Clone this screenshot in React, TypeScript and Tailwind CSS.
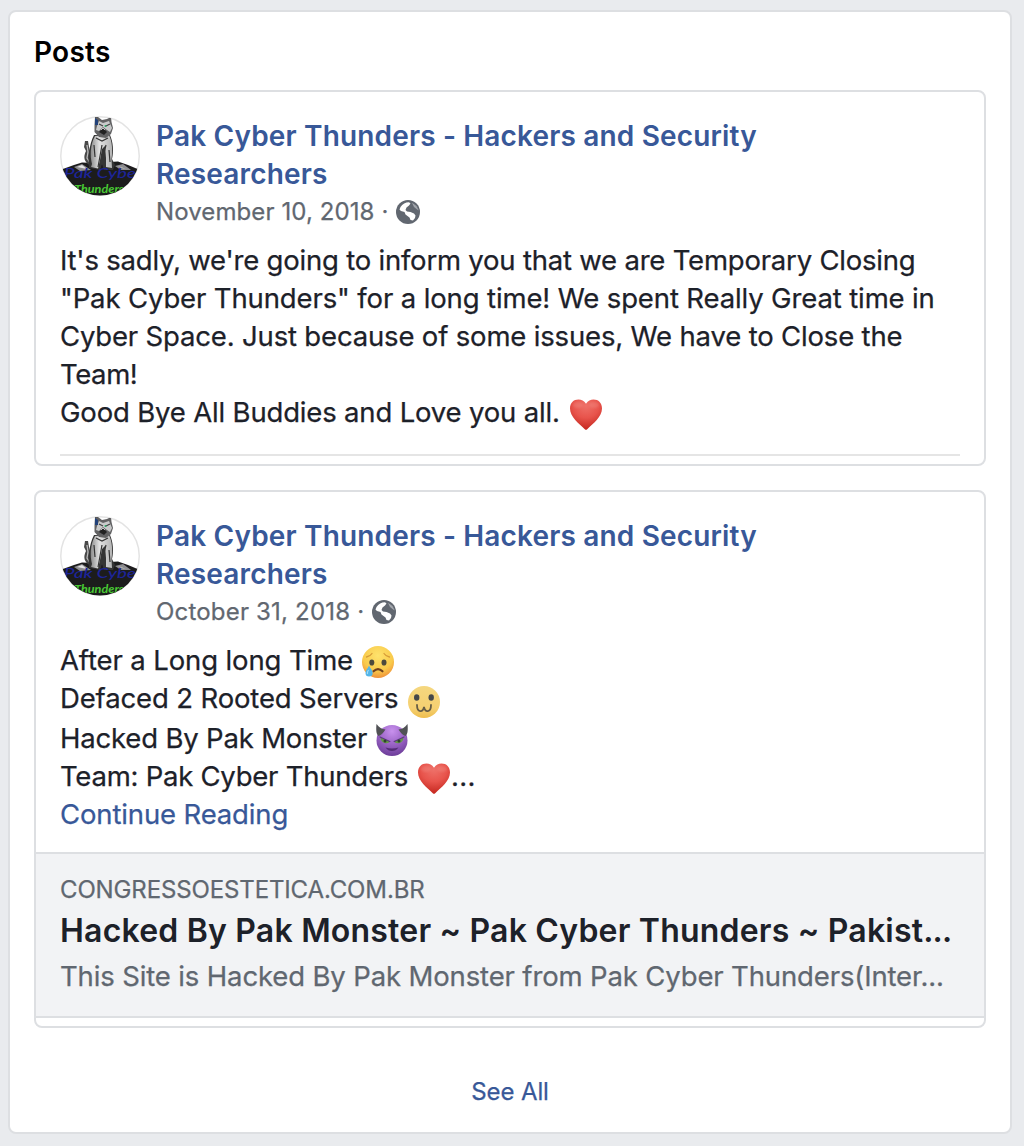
import type { ReactNode } from 'react';

function Avatar() {
  return (
    <svg viewBox="0 0 80 80" className="size-20 shrink-0" aria-hidden="true">
      <defs>
        <clipPath id="round"><circle cx="40" cy="40" r="39.5" /></clipPath>
        <filter id="soft"><feGaussianBlur stdDeviation="0.5" /></filter>
        <linearGradient id="fur" x1="0" x2="1">
          <stop offset="0" stopColor="#8c8c8c" />
          <stop offset="0.4" stopColor="#e2e2e2" />
          <stop offset="1" stopColor="#b4b4b4" />
        </linearGradient>
      </defs>
      <g clipPath="url(#round)">
        <rect width="80" height="80" fill="#fff" />
        <g filter="url(#soft)">
          <path d="M0 54 L14 49 L22 46.500 L34 47 L58 45.500 L68 49 L80 54 V80 H0Z" fill="#1d1b1e" />
          <path d="M14 51 L22 48 L31 54 L20 55Z M55 50 L63 48 L71 54 L61 54Z" fill="#8d8d90" />
          <path d="M17 51 L22 49 L27 53Z M58 50 L66 53 L62 52Z" fill="#e5e5e5" />
          <path d="M28 48 C23 44 24 39 26 35 L24 31 L25 25 L28 25 L29 31 L32 42 L33 51Z" fill="#494949" />
          <path d="M27 29 L28 36 L27 42 L30 47" stroke="#b9b9b9" strokeWidth="1.300" fill="none" />
          <path d="M34 19 C29 28 28 43 29 52 L40 54 L42 48 L44 54 L53 54 L55 49 L52 43 C54 35 53 26 50 19Z" fill="#353535" />
          <path d="M35 20 C30 29 30 40 32 48 L31 51 L38 52.500 L40 44 L42 33 L45 30 L46 42 L46 51 L52 52 L51.500 43 C53 34 52 25 49 19Z" fill="url(#fur)" />
          <path d="M42 29 L38 51 M46 29 L42 45 M49 34 L50 46 M34 29 L35 41 M36 22 L42 25 L48 22" stroke="#343434" strokeWidth="1.200" fill="none" />
          <path d="M35 1 L38 1 L42 4 L47 3 L51 1 L51.500 6 L53 12 L51 18 L46 22 L39 21 L34.500 16 L34.500 9Z" fill="#626264" />
          <path d="M39 5 L43 7 L49 5 L52 12 L50 16 L47 14 L43 11 L39 15 L36 14 L37 10Z" fill="#c8c9c9" />
          <path d="M39 8 L43 10 M50 8 L46 10" stroke="#3e3e3e" strokeWidth="1.100" />
          <path d="M39 16 L43 12 L47 16 L44 19Z" fill="#242424" />
          <path d="M41 14 L43 12 L45 14" fill="none" stroke="#e6e6e6" strokeWidth=".8" />
          <path d="M35 2 L38 4 L38 9 L35 9Z" fill="#244379" />
          <circle cx="45.500" cy="10" r="1" fill="#28a565" />
        </g>
        <text x="4" y="62" fontFamily="Lato, sans-serif" fontStyle="italic" fontWeight="500" fontSize="12.500" textLength="72" lengthAdjust="spacingAndGlyphs" fill="#1c249a">Pak Cybe</text>
        <text x="14" y="77" fontFamily="Lato, sans-serif" fontStyle="italic" fontWeight="700" fontSize="11" textLength="50" lengthAdjust="spacingAndGlyphs" fill="#48c934">Thunders</text>
      </g>
      <circle cx="40" cy="40" r="39.250" fill="none" stroke="#000" strokeOpacity="0.11" strokeWidth="1.500" />
    </svg>
  );
}

function Globe() {
  return (
    <svg viewBox="0 0 24 24" className="ml-2 size-6" aria-hidden="true">
      <circle cx="12" cy="12" r="12" fill="#616770" />
      <path d="M4.500 7 C6.500 4 9.500 2.300 13 2.300 L14.500 3.500 L13 5.500 L10.500 7.500 L9.500 10 L11 11.500 L14.500 12 L18 13.500 L19.500 15.500 L19 18 L17 20.500 L14.500 20 L13.500 17.500 L9.500 14.500 L8.500 12 L5 11 L3.500 9.500Z" fill="#fff" />
      <path d="M16 2.800 L20.500 6 L22.800 10.500 L20.500 9 L18 7Z" fill="#a2a6ac" />
    </svg>
  );
}

function Heart({ className }: { className: string }) {
  return (
    <svg viewBox="0 0 32 32" className={`size-8 shrink-0 ${className}`} aria-hidden="true">
      <defs>
        <radialGradient id="heart" cx="0.5" cy="0.2" r="0.8">
          <stop offset="0" stopColor="#ee7169" />
          <stop offset="0.5" stopColor="#e8544c" />
          <stop offset="1" stopColor="#c5271f" />
        </radialGradient>
        <filter id="glow"><feGaussianBlur stdDeviation="1.2" /></filter>
      </defs>
      <path d="M16 4.800 C14 1.800 11.500 .6 8.500 .6 C3.500 .6 0 4 0 9.500 C0 18 9 24.500 14.800 30.200 Q16 31.200 17.200 30.200 C23 24.500 32 18 32 9.500 C32 4 28.500 .6 23.500 .6 C20.500 .6 18 1.800 16 4.800Z" fill="url(#heart)" />
      <g filter="url(#glow)" fill="#f18b83" opacity=".4">
        <ellipse cx="8" cy="6" rx="5" ry="3" />
        <ellipse cx="24" cy="6" rx="5" ry="3" />
      </g>
    </svg>
  );
}

function SadFace() {
  return (
    <svg viewBox="0 0 32 32" className="mt-[5px] ml-[9px] size-8 shrink-0" aria-hidden="true">
      <defs>
        <radialGradient id="sad" cx=".5" cy=".3" r=".72">
          <stop offset="0" stopColor="#fee36d" />
          <stop offset=".65" stopColor="#f9ca4b" />
          <stop offset="1" stopColor="#ef8d38" />
        </radialGradient>
      </defs>
      <circle cx="16" cy="16" r="16" fill="url(#sad)" />
      <path d="M4.500 11 Q8 10.500 10 7.500 M27.500 11 Q24 10.500 22 7.500" stroke="#d59a37" strokeWidth="1.300" strokeLinecap="round" fill="none" />
      <ellipse cx="9.800" cy="16.500" rx="2.500" ry="3.100" fill="#4d4a3c" />
      <ellipse cx="22" cy="16.500" rx="2.500" ry="3.100" fill="#4d4a3c" />
      <path d="M11.500 25.300 Q16 20.800 20.500 25.300" stroke="#70401e" strokeWidth="2.200" strokeLinecap="round" fill="none" />
      <path d="M7 19.500 C6 22.500 3.500 24 3.500 27 A3.600 3.600 0 0 0 10.700 27 C10.700 24 8 22.500 7 19.500Z" fill="#54b5e8" />
      <path d="M6.500 24 Q5 26 5.500 28" stroke="#a2dcf5" strokeWidth="1.200" fill="none" />
    </svg>
  );
}

function CatSmile() {
  return (
    <svg viewBox="0 0 32 32" className="mt-[7px] ml-[10px] size-8 shrink-0" aria-hidden="true">
      <defs>
        <linearGradient id="smile" x1="0" y1="0" x2="0" y2="1">
          <stop offset="0" stopColor="#f5d77f" />
          <stop offset=".7" stopColor="#f5d071" />
          <stop offset="1" stopColor="#eebd4c" />
        </linearGradient>
      </defs>
      <circle cx="16" cy="16" r="16" fill="url(#smile)" />
      <ellipse cx="8.700" cy="11.500" rx="2.700" ry="3.300" fill="#45484a" />
      <ellipse cx="23.200" cy="11.500" rx="2.700" ry="3.300" fill="#45484a" />
      <path d="M9 19 C9 27 15 26.500 16 21 C17 26.500 23 27 23 19" stroke="#665d45" strokeWidth="1.800" strokeLinecap="round" fill="none" />
    </svg>
  );
}

function Devil() {
  return (
    <svg viewBox="0 0 32 32" className="mt-[5px] ml-[9px] size-8 shrink-0" aria-hidden="true">
      <defs>
        <radialGradient id="devil" cx=".5" cy=".2" r=".8">
          <stop offset="0" stopColor="#c891ed" />
          <stop offset=".5" stopColor="#9d66c8" />
          <stop offset="1" stopColor="#6d3d99" />
        </radialGradient>
      </defs>
      <circle cx="16" cy="16.500" r="15.500" fill="url(#devil)" />
      <path d="M.5 0 C0 5 0 10 2.500 12 Q6 11 9.500 5.500 C6 5 3 3.500 .5 0Z M31.500 0 C32 5 32 10 29.500 12 Q26 11 22.500 5.500 C26 5 29 3.500 31.500 0Z" fill="#505155" />
      <path d="M4.500 13.500 L14 17.500 Q12.500 20 8.500 19 Q5 18 4.500 13.500Z M27.500 13.500 L18 17.500 Q19.500 20 23.500 19 Q27 18 27.500 13.500Z" fill="#649747" />
      <path d="M4 13 L13.800 17.500 M28 13 L18.200 17.500" stroke="#5c387f" strokeWidth="1.300" strokeLinecap="round" />
      <circle cx="9" cy="17" r="1.500" fill="#2f402c" />
      <circle cx="23" cy="17" r="1.500" fill="#2f402c" />
      <path d="M9.500 23.500 Q16 25.500 22.500 23.500 Q20 27 16 27 Q12 27 9.500 23.500Z" fill="#542c77" />
    </svg>
  );
}

function Line({ children, className = '' }: { children: ReactNode; className?: string }) {
  return <div className={`flex h-[38px] whitespace-nowrap ${className}`}>{children}</div>;
}

function PostHeader({ date, dateClass }: { date: string; dateClass: string }) {
  return (
    <header className="flex gap-4 px-6 pt-6">
      <Avatar />
      <div className="pt-px">
        <a className="block text-[28px] leading-[38px] font-semibold tracking-[0.16px] whitespace-nowrap text-[#385898]">
          Pak Cyber Thunders - Hackers and Security
          <br />
          Researchers
        </a>
        <div className={`flex h-[38px] items-center text-2xl text-[#616770] [-webkit-text-stroke:0.25px] ${dateClass}`}>
          <span>{date} ·</span>
          <Globe />
        </div>
      </div>
    </header>
  );
}

export default function App() {
  return (
    <main className="h-[1146px] bg-[#e9ebee] pt-2.5 pr-3 pl-2 font-[Inter,sans-serif] text-[#1d2129]">
      <section className="h-[1124px] rounded-lg border-2 border-[#dddfe2] bg-white px-6">
        <h1 className="h-[78px] pt-5 text-[28px] leading-10 font-semibold tracking-[0.25px] text-black">Posts</h1>

        <article className="h-[376px] rounded-lg border-2 border-[#dddfe2]">
          <PostHeader date="November 10, 2018" dateClass="tracking-[0.1px]" />
          <div className="mx-6 h-[225px] border-b-2 border-[#e5e5e5] pt-[10px] text-[27.5px] leading-[38px] tracking-[-0.17px] [-webkit-text-stroke:0.25px]">
            <Line className="tracking-[-0.21px]">It's sadly, we're going to inform you that we are Temporary Closing</Line>
            <Line className="tracking-[-0.13px]">"Pak Cyber Thunders" for a long time! We spent Really Great time in</Line>
            <Line>Cyber Space. Just because of some issues, We have to Close the</Line>
            <Line className="tracking-[-0.4px]">Team!</Line>
            <Line>
              Good Bye All Buddies and Love you all.
              <Heart className="mt-1.5 ml-[10px]" />
            </Line>
          </div>
        </article>

        <article className="mt-6 h-[538px] rounded-lg border-2 border-[#dddfe2]">
          <PostHeader date="October 31, 2018" dateClass="tracking-[0.19px]" />
          <div className="mx-6 h-[221px] pt-[10px] text-[27.5px] leading-[38px] tracking-[-0.14px] [-webkit-text-stroke:0.25px]">
            <Line className="tracking-[-0.12px]">After a Long long Time<SadFace /></Line>
            <Line className="mb-0.5">Defaced 2 Rooted Servers<CatSmile /></Line>
            <Line className="tracking-[-0.18px]">Hacked By Pak Monster<Devil /></Line>
            <Line className="tracking-[-0.24px]">
              Team: Pak Cyber Thunders
              <Heart className="mt-1.5 ml-[10px]" />
              <span className="ml-px tracking-[0.3px]">...</span>
            </Line>
            <Line className="text-[#385898]">Continue Reading</Line>
          </div>
          <div className="h-[166px] border-y-2 border-[#dddfe2] bg-[#f2f3f5] px-6 pt-5 whitespace-nowrap">
            <div className="h-8 text-2xl leading-8 tracking-[-0.13px] text-[#606770] [-webkit-text-stroke:0.25px]">CONGRESSOESTETICA.COM.BR</div>
            <div className="h-[50px] text-[32px] leading-[50px] font-semibold tracking-[0.2px]">
              Hacked By Pak Monster ~ Pak Cyber Thunders ~ Pakist<span className="tracking-[-0.8px]">...</span>
            </div>
            <div className="h-10 text-[27.5px] leading-10 tracking-[-0.14px] text-[#606770] [-webkit-text-stroke:0.25px]">This Site is Hacked By Pak Monster from Pak Cyber Thunders(Inter...</div>
          </div>
        </article>

        <a className="mt-12 block text-center text-2xl tracking-[-0.1px] text-[#385898] [-webkit-text-stroke:0.25px]">See All</a>
      </section>
    </main>
  );
}
